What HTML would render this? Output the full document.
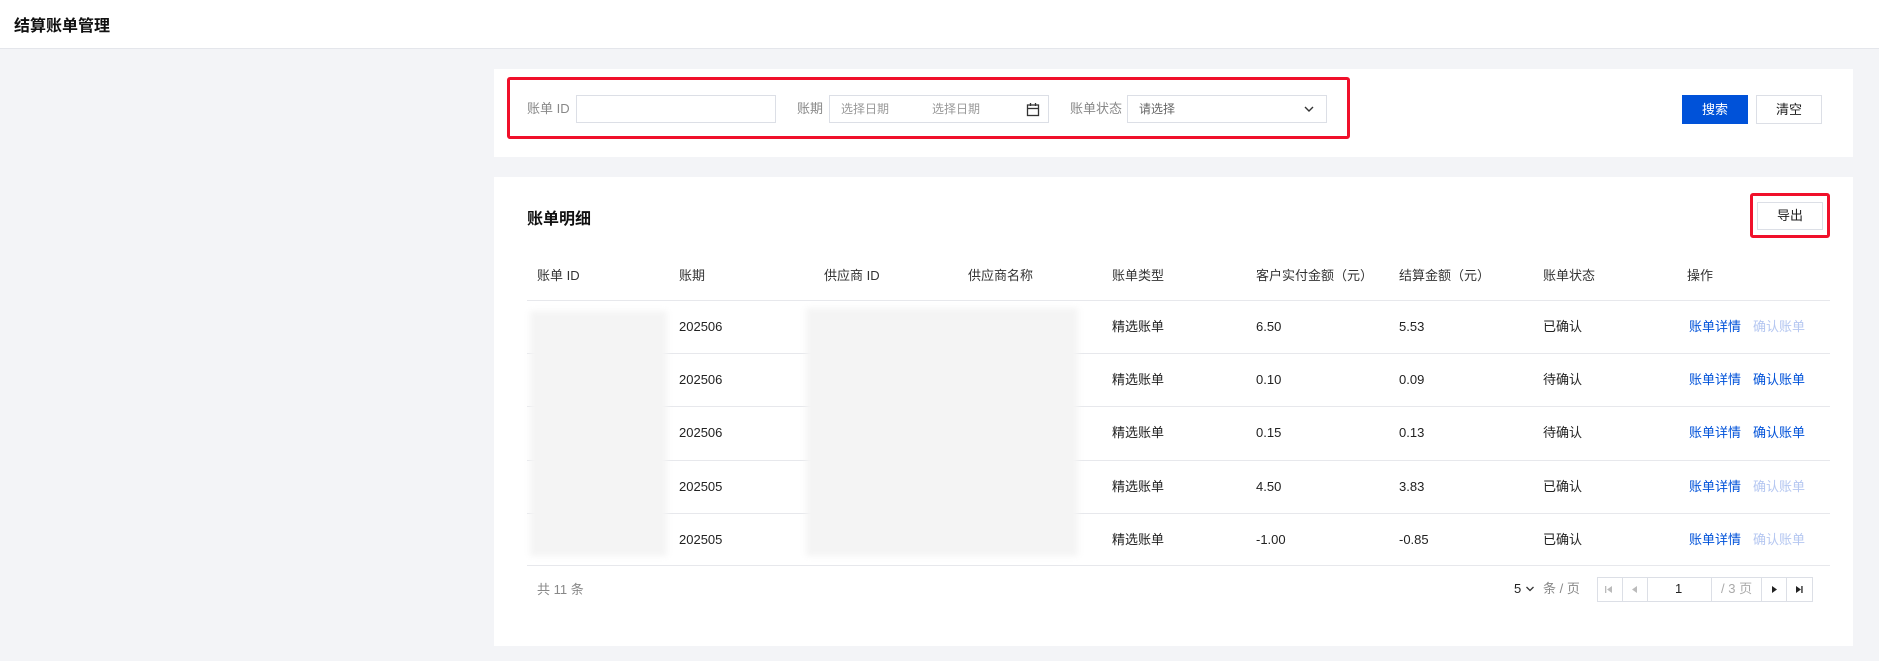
<!DOCTYPE html>
<html><head><meta charset="utf-8"><style>
*{box-sizing:border-box;margin:0;padding:0}
body{width:1879px;height:661px;background:#f3f4f7;font-family:"Liberation Sans","Noto Sans CJK SC",sans-serif;position:relative;overflow:hidden;color:#222;font-size:13px;line-height:16px}
.abs{position:absolute;line-height:16px}
.hdr{left:0;top:0;width:1879px;height:49px;background:#fff;border-bottom:1px solid #e4e6eb}
.card{background:#fff;left:494px;width:1359px}
.inp{border:1px solid #dcdfe6;background:#fff;height:28px}
.lbl{color:#888;font-size:13px}
.btn{height:29px;line-height:27px;text-align:center;font-size:13px;border:1px solid #dcdfe6;background:#fff;color:#222}
.th{top:268px;font-size:13px;color:#333}
.line{left:527px;width:1303px;height:1px;background:#e7e8ec}
.cell{font-size:13px;color:#222}
.lnk{color:#0052d9}
.dis{color:#b5c7f1}
.blur{background:#f4f4f4;filter:blur(3px)}
</style></head><body>
<div class="abs hdr"></div>
<div class="abs" style="left:14px;top:17px;font-size:16px;line-height:20px;font-weight:bold;color:#111">结算账单管理</div>

<div class="abs card" style="top:69px;height:88px"></div>
<div class="abs" style="left:507px;top:77px;width:843px;height:62px;border:3px solid #f0102a;border-radius:3px"></div>
<div class="abs lbl" style="left:527px;top:101px">账单 ID</div>
<div class="abs inp" style="left:576px;top:95px;width:200px"></div>
<div class="abs lbl" style="left:797px;top:101px">账期</div>
<div class="abs inp" style="left:829px;top:95px;width:220px"></div>
<div class="abs lbl" style="left:841px;top:101px;font-size:12px;color:#999">选择日期</div>
<div class="abs lbl" style="left:932px;top:101px;font-size:12px;color:#999">选择日期</div>
<svg class="abs" style="left:1026px;top:102px" width="14" height="15" viewBox="0 0 14 15"><rect x="1.5" y="3" width="11" height="10.5" fill="none" stroke="#333" stroke-width="1.3"/><line x1="1.5" y1="6.5" x2="12.5" y2="6.5" stroke="#333" stroke-width="1.3"/><line x1="4.5" y1="1" x2="4.5" y2="4" stroke="#333" stroke-width="1.3"/><line x1="9.5" y1="1" x2="9.5" y2="4" stroke="#333" stroke-width="1.3"/></svg>
<div class="abs lbl" style="left:1070px;top:101px">账单状态</div>
<div class="abs inp" style="left:1127px;top:95px;width:200px"></div>
<div class="abs" style="left:1139px;top:101px;font-size:12px;color:#666">请选择</div>
<svg class="abs" style="left:1303px;top:104px" width="12" height="10" viewBox="0 0 12 10"><path d="M2 3l4 4 4-4" fill="none" stroke="#333" stroke-width="1.4"/></svg>
<div class="abs btn" style="left:1682px;top:95px;width:66px;line-height:27px;background:#0052d9;border-color:#0052d9;color:#fff">搜索</div>
<div class="abs btn" style="left:1756px;top:95px;width:66px;line-height:27px">清空</div>

<div class="abs card" style="top:177px;height:469px"></div>
<div class="abs" style="left:527px;top:210px;font-size:16px;line-height:20px;font-weight:bold;color:#111">账单明细</div>
<div class="abs" style="left:1750px;top:193px;width:80px;height:45px;border:3px solid #f0102a;border-radius:3px"></div>
<div class="abs btn" style="left:1757px;top:202px;width:66px;height:28px;line-height:26px">导出</div>

<div class="abs th" style="left:537px">账单 ID</div>
<div class="abs th" style="left:679px">账期</div>
<div class="abs th" style="left:824px">供应商 ID</div>
<div class="abs th" style="left:968px">供应商名称</div>
<div class="abs th" style="left:1112px">账单类型</div>
<div class="abs th" style="left:1256px">客户实付金额（元）</div>
<div class="abs th" style="left:1399px">结算金额（元）</div>
<div class="abs th" style="left:1543px">账单状态</div>
<div class="abs th" style="left:1687px">操作</div>
<div class="abs line" style="top:300px"></div>
<div class="abs line" style="top:353px"></div>
<div class="abs line" style="top:406px"></div>
<div class="abs line" style="top:460px"></div>
<div class="abs line" style="top:513px"></div>
<div class="abs line" style="top:565px"></div>

<div class="abs blur" style="left:530px;top:311px;width:137px;height:245px"></div>
<div class="abs blur" style="left:806px;top:308px;width:272px;height:248px"></div>

<div class="abs cell" style="left:679px;top:319px">202506</div>
<div class="abs cell" style="left:679px;top:372px">202506</div>
<div class="abs cell" style="left:679px;top:425px">202506</div>
<div class="abs cell" style="left:679px;top:479px">202505</div>
<div class="abs cell" style="left:679px;top:532px">202505</div>

<div class="abs cell" style="left:1112px;top:319px">精选账单</div>
<div class="abs cell" style="left:1112px;top:372px">精选账单</div>
<div class="abs cell" style="left:1112px;top:425px">精选账单</div>
<div class="abs cell" style="left:1112px;top:479px">精选账单</div>
<div class="abs cell" style="left:1112px;top:532px">精选账单</div>

<div class="abs cell" style="left:1256px;top:319px">6.50</div>
<div class="abs cell" style="left:1256px;top:372px">0.10</div>
<div class="abs cell" style="left:1256px;top:425px">0.15</div>
<div class="abs cell" style="left:1256px;top:479px">4.50</div>
<div class="abs cell" style="left:1256px;top:532px">-1.00</div>

<div class="abs cell" style="left:1399px;top:319px">5.53</div>
<div class="abs cell" style="left:1399px;top:372px">0.09</div>
<div class="abs cell" style="left:1399px;top:425px">0.13</div>
<div class="abs cell" style="left:1399px;top:479px">3.83</div>
<div class="abs cell" style="left:1399px;top:532px">-0.85</div>

<div class="abs cell" style="left:1543px;top:319px">已确认</div>
<div class="abs cell" style="left:1543px;top:372px">待确认</div>
<div class="abs cell" style="left:1543px;top:425px">待确认</div>
<div class="abs cell" style="left:1543px;top:479px">已确认</div>
<div class="abs cell" style="left:1543px;top:532px">已确认</div>

<div class="abs cell lnk" style="left:1689px;top:319px">账单详情</div>
<div class="abs cell lnk" style="left:1689px;top:372px">账单详情</div>
<div class="abs cell lnk" style="left:1689px;top:425px">账单详情</div>
<div class="abs cell lnk" style="left:1689px;top:479px">账单详情</div>
<div class="abs cell lnk" style="left:1689px;top:532px">账单详情</div>
<div class="abs cell dis" style="left:1753px;top:319px">确认账单</div>
<div class="abs cell lnk" style="left:1753px;top:372px">确认账单</div>
<div class="abs cell lnk" style="left:1753px;top:425px">确认账单</div>
<div class="abs cell dis" style="left:1753px;top:479px">确认账单</div>
<div class="abs cell dis" style="left:1753px;top:532px">确认账单</div>

<div class="abs" style="left:537px;top:582px;color:#888;font-size:13px">共 11 条</div>
<div class="abs" style="left:1514px;top:581px;font-size:13px;color:#222">5</div>
<svg class="abs" style="left:1525px;top:584px" width="10" height="10" viewBox="0 0 10 10"><path d="M1.5 3l3.5 3.5 3.5-3.5" fill="none" stroke="#333" stroke-width="1.3"/></svg>
<div class="abs" style="left:1543px;top:581px;font-size:13px;color:#888">条 / 页</div>
<div class="abs" style="left:1597px;top:577px;width:216px;height:25px;border:1px solid #dcdfe6"></div>
<div class="abs" style="left:1622px;top:577px;width:1px;height:25px;background:#dcdfe6"></div>
<div class="abs" style="left:1647px;top:577px;width:1px;height:25px;background:#dcdfe6"></div>
<div class="abs" style="left:1711px;top:577px;width:1px;height:25px;background:#dcdfe6"></div>
<div class="abs" style="left:1761px;top:577px;width:1px;height:25px;background:#dcdfe6"></div>
<div class="abs" style="left:1786px;top:577px;width:1px;height:25px;background:#dcdfe6"></div>
<svg class="abs" style="left:1604px;top:585px" width="10" height="9" viewBox="0 0 10 9"><rect x="1" y="1" width="1.3" height="7" fill="#bbb"/><path d="M8 1L3 4.5 8 8z" fill="#bbb"/></svg>
<svg class="abs" style="left:1630px;top:585px" width="10" height="9" viewBox="0 0 10 9"><path d="M7 1L2 4.5 7 8z" fill="#bbb"/></svg>
<div class="abs" style="left:1675px;top:581px;font-size:13px">1</div>
<div class="abs" style="left:1721px;top:581px;font-size:13px;color:#aaa">/ 3 页</div>
<svg class="abs" style="left:1769px;top:585px" width="10" height="9" viewBox="0 0 10 9"><path d="M3 1L8 4.5 3 8z" fill="#222"/></svg>
<svg class="abs" style="left:1794px;top:585px" width="10" height="9" viewBox="0 0 10 9"><path d="M2 1L7 4.5 2 8z" fill="#222"/><rect x="7.3" y="1" width="1.3" height="7" fill="#222"/></svg>
</body></html>
